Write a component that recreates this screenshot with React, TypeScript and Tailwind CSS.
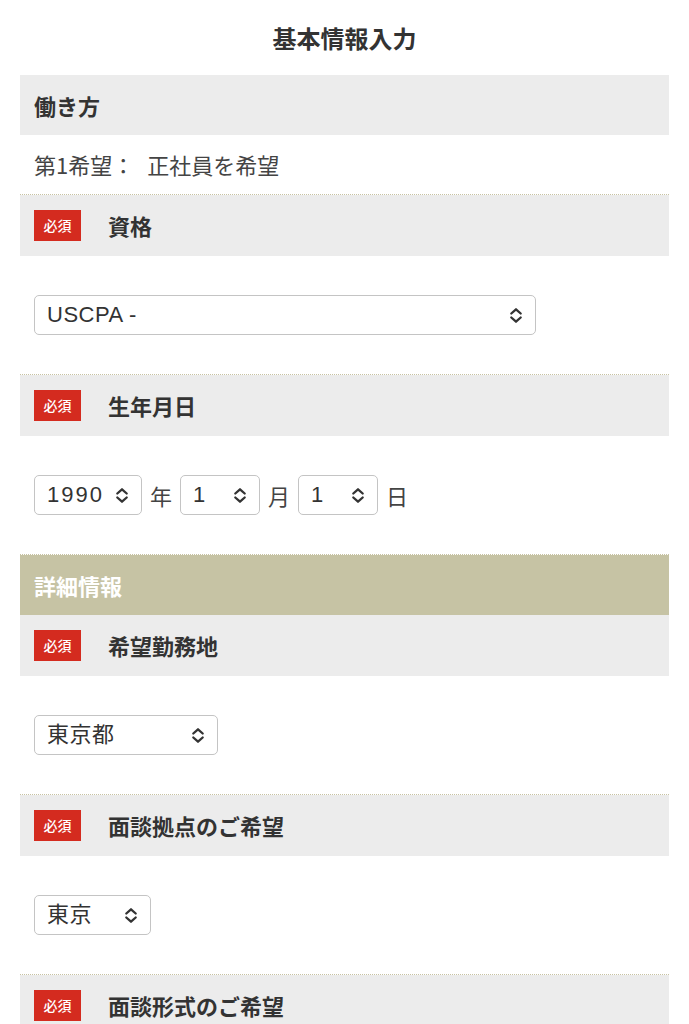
import React from "react";

const font = { fontFamily: '"Noto Sans CJK JP", "Noto Sans", sans-serif' };

function Chevron() {
  return (
    <svg width="14" height="17" viewBox="0 0 14 17" fill="none" className="shrink-0">
      <path d="M2.3 6.5 L7 2.3 L11.7 6.5" stroke="#333" strokeWidth="2.3" strokeLinecap="round" strokeLinejoin="round" />
      <path d="M2.3 10.5 L7 14.7 L11.7 10.5" stroke="#333" strokeWidth="2.3" strokeLinecap="round" strokeLinejoin="round" />
    </svg>
  );
}

function Select({ value, width, wide = false }: { value: string; width: string; wide?: boolean }) {
  return (
    <div
      className={`flex h-[40px] items-center justify-between rounded-[5px] border border-[#c4c4c4] bg-white pl-[12px] pr-[12px] ${width}`}
    >
      <span
        className={`text-[22px] leading-none text-[#333] ${wide ? "tracking-[2px]" : "tracking-[0.5px]"}`}
        style={{ fontFamily: '"Liberation Sans", "Noto Sans CJK JP", sans-serif' }}
      >
        {value}
      </span>
      <Chevron />
    </div>
  );
}

function Badge() {
  return (
    <span className="flex h-[31px] w-[47px] shrink-0 items-center justify-center bg-[#d42b1f] text-[14px] font-medium text-white">
      必須
    </span>
  );
}

function Header({ label }: { label: string }) {
  return (
    <div className="flex h-[61px] items-center bg-[#ececec] px-[14px]">
      <Badge />
      <span className="ml-[27px] text-[22px] font-bold text-[#333]">{label}</span>
    </div>
  );
}

function Dotted() {
  return <div className="h-px border-t border-dotted border-[#c8c3a3]" />;
}

function Body({ children }: { children: React.ReactNode }) {
  return <div className="flex h-[118px] items-center px-[14px]">{children}</div>;
}

export default function App() {
  return (
    <div className="min-h-screen bg-white" style={font}>
      <div className="flex h-[75px] items-center justify-center">
        <h1 className="text-[24px] font-bold text-[#333]">基本情報入力</h1>
      </div>
      <div className="px-[20px]">
        <div className="flex h-[60px] items-center bg-[#ececec] px-[14px]">
          <span className="text-[22px] font-bold text-[#333]">働き方</span>
        </div>
        <div className="flex h-[59px] items-center px-[14px] text-[22px] text-[#444]">
          <span>第1希望：</span>
          <span className="ml-[13px]">正社員を希望</span>
        </div>
        <Dotted />
        <Header label="資格" />
        <Body>
          <Select value="USCPA -" width="w-[502px]" />
        </Body>
        <Dotted />
        <Header label="生年月日" />
        <Body>
          <div className="flex items-center">
            <Select value="1990" width="w-[108px]" wide />
            <span className="mx-[8px] text-[22px] text-[#444]">年</span>
            <Select value="1" width="w-[80px]" />
            <span className="mx-[8px] text-[22px] text-[#444]">月</span>
            <Select value="1" width="w-[80px]" />
            <span className="mx-[8px] text-[22px] text-[#444]">日</span>
          </div>
        </Body>
        <Dotted />
        <div className="flex h-[60px] items-center bg-[#c6c3a4] px-[14px]">
          <span className="text-[22px] font-bold text-white">詳細情報</span>
        </div>
        <Header label="希望勤務地" />
        <Body>
          <Select value="東京都" width="w-[184px]" />
        </Body>
        <Dotted />
        <Header label="面談拠点のご希望" />
        <Body>
          <Select value="東京" width="w-[117px]" />
        </Body>
        <Dotted />
        <Header label="面談形式のご希望" />
      </div>
    </div>
  );
}
